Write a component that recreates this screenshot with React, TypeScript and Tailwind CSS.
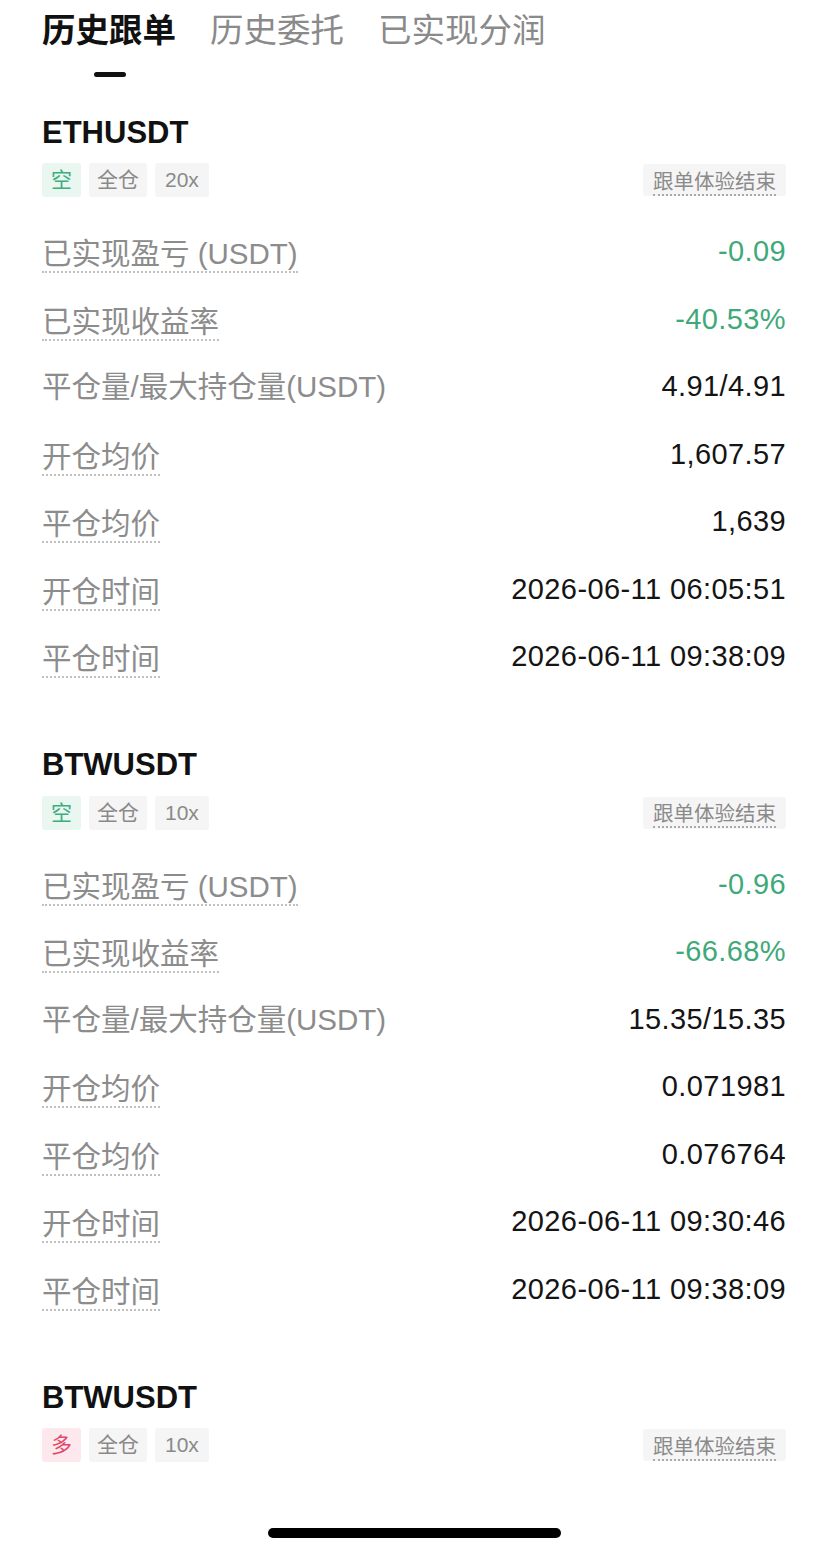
import React from "react";

type Row = { label: string; value: string; green?: boolean; dotted?: boolean };
type Order = { symbol: string; side: "空" | "多"; lev: string; rows: Row[] };

const orders: Order[] = [
  {
    symbol: "ETHUSDT",
    side: "空",
    lev: "20x",
    rows: [
      { label: "已实现盈亏 (USDT)", value: "-0.09", green: true, dotted: true },
      { label: "已实现收益率", value: "-40.53%", green: true, dotted: true },
      { label: "平仓量/最大持仓量(USDT)", value: "4.91/4.91" },
      { label: "开仓均价", value: "1,607.57", dotted: true },
      { label: "平仓均价", value: "1,639", dotted: true },
      { label: "开仓时间", value: "2026-06-11 06:05:51", dotted: true },
      { label: "平仓时间", value: "2026-06-11 09:38:09", dotted: true },
    ],
  },
  {
    symbol: "BTWUSDT",
    side: "空",
    lev: "10x",
    rows: [
      { label: "已实现盈亏 (USDT)", value: "-0.96", green: true, dotted: true },
      { label: "已实现收益率", value: "-66.68%", green: true, dotted: true },
      { label: "平仓量/最大持仓量(USDT)", value: "15.35/15.35" },
      { label: "开仓均价", value: "0.071981", dotted: true },
      { label: "平仓均价", value: "0.076764", dotted: true },
      { label: "开仓时间", value: "2026-06-11 09:30:46", dotted: true },
      { label: "平仓时间", value: "2026-06-11 09:38:09", dotted: true },
    ],
  },
  { symbol: "BTWUSDT", side: "多", lev: "10x", rows: [] },
];

const font = { fontFamily: '"Liberation Sans", "Noto Sans CJK SC", sans-serif' };

function Card({ o }: { o: Order }) {
  return (
    <div className="pb-[55px]">
      <div className="h-[40px] flex items-center text-[31px] font-bold text-[#111]">{o.symbol}</div>
      <div className="mt-[10px] h-[34px] flex items-center">
        <span
          className={
            o.side === "空"
              ? "h-[34px] px-[9px] flex items-center rounded-[3px] text-[21px] bg-[#e9f7f0] text-[#3fae7e]"
              : "h-[34px] px-[9px] flex items-center rounded-[3px] text-[21px] bg-[#fde9ed] text-[#e0466a]"
          }
        >
          {o.side}
        </span>
        <span className="ml-[8px] h-[34px] px-[8px] flex items-center rounded-[3px] text-[21px] bg-[#f5f5f5] text-[#8a8a8a]">
          全仓
        </span>
        <span className="ml-[8px] h-[34px] px-[10px] flex items-center rounded-[3px] text-[21px] bg-[#f5f5f5] text-[#8a8a8a]">
          {o.lev}
        </span>
        <span className="ml-auto h-[32px] px-[10px] flex items-center rounded-[3px] bg-[#f5f5f5]">
          <span className="text-[20.5px] leading-[25px] text-[#8a8a8a] border-b-2 border-dotted border-[#aaa] translate-y-[2px]">
            跟单体验结束
          </span>
        </span>
      </div>
      <div className="mt-[21px]">
        {o.rows.map((r, i) => (
          <div key={i} className="h-[67.5px] flex items-center justify-between">
            <span
              className={
                r.dotted
                  ? "text-[29.5px] leading-[35px] text-[#8c8c8c] border-b-2 border-dotted border-[#c0c0c0] translate-y-[3px]"
                  : "text-[29.5px] leading-[35px] text-[#8c8c8c]"
              }
            >
              {r.label}
            </span>
            <span
              className={
                r.green
                  ? "text-[29px] tracking-[0.4px] text-[#3fa97a]"
                  : "text-[29px] tracking-[0.4px] text-[#141414]"
              }
            >
              {r.value}
            </span>
          </div>
        ))}
      </div>
    </div>
  );
}

export default function App() {
  return (
    <div className="relative w-[828px] h-[1556px] overflow-hidden bg-white" style={font}>
      <div className="px-[42px]">
        <div className="pt-[10px] flex gap-[34px] h-[52px] items-center text-[33.5px]">
          <span className="font-bold text-[#111]">历史跟单</span>
          <span className="text-[#8a8a8a]">历史委托</span>
          <span className="text-[#8a8a8a]">已实现分润</span>
        </div>
        <div className="mt-[20px] ml-[52px] w-[32px] h-[5px] rounded-full bg-[#111]" />
        <div className="pt-[36px]">
          {orders.map((o, i) => (
            <Card key={i} o={o} />
          ))}
        </div>
      </div>
      <div className="absolute left-[268px] bottom-[18px] w-[293px] h-[10px] rounded-full bg-black" />
    </div>
  );
}
